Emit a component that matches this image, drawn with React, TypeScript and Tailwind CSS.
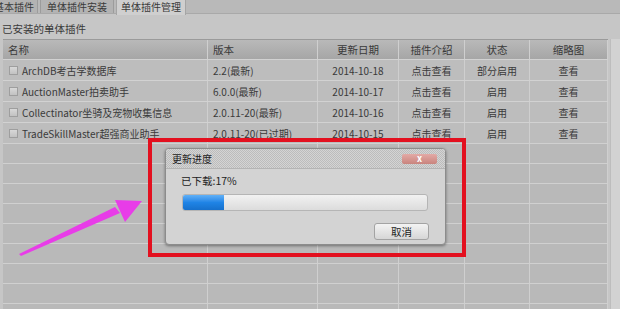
import React from 'react';

const rows = [
  { name: 'ArchDB考古学数据库', ver: '2.2(最新)', date: '2014-10-18', state: '部分启用' },
  { name: 'AuctionMaster拍卖助手', ver: '6.0.0(最新)', date: '2014-10-17', state: '启用' },
  { name: 'Collectinator坐骑及宠物收集信息', ver: '2.0.11-20(最新)', date: '2014-10-16', state: '启用' },
  { name: 'TradeSkillMaster超强商业助手', ver: '2.0.11-20(已过期)', date: '2014-10-15', state: '启用' },
];

const cols = 'grid grid-cols-[205px_110px_81px_66px_65px_78px]';
const cell = 'border-r border-[#cfcfcf] flex items-center';

const App = () => {
  return (
    <div
      className="relative w-[620px] h-[309px] overflow-hidden bg-[#c6c6c6] text-[#3a3a3a] text-[11px]"
      style={{ fontFamily: '"Noto Sans CJK SC", "Liberation Sans", sans-serif' }}
    >
      {/* tabs */}
      <div className="flex h-[14px] bg-[#b9b9b9] border-b border-[#a9a9a9] text-[10px] leading-[13px]">
        <div className="w-[38px] bg-[#b3b3b3] border-r border-[#9c9c9c] overflow-hidden whitespace-nowrap flex justify-end pr-[3px]">
          <span className="shrink-0">基本插件</span>
        </div>
        <div className="w-[74px] ml-[2px] bg-[#b3b3b3] border-x border-[#9c9c9c] text-center">单体插件安装</div>
        <div className="w-[70px] ml-[2px] bg-[#cfcfcf] border-x border-[#a5a5a5] text-center h-[15px]">单体插件管理</div>
      </div>

      <div className="pl-[2px] pt-[7px] h-[25px] text-[10.5px]">已安装的单体插件</div>

      <div className="flex">
        <div className="ml-[3px] w-[605px]">
          {/* header */}
          <div className={`${cols} h-[20px] bg-gradient-to-b from-[#b9b9b9] to-[#a6a6a6] border-t border-[#9a9a9a] text-[10.5px]`}>
            <div className={`${cell} pl-[5px] border-[#bcbcbc]`}>名称</div>
            <div className={`${cell} pl-[5px] border-[#bcbcbc]`}>版本</div>
            <div className={`${cell} justify-center border-[#bcbcbc]`}>更新日期</div>
            <div className={`${cell} justify-center border-[#bcbcbc]`}>插件介绍</div>
            <div className={`${cell} justify-center border-[#bcbcbc]`}>状态</div>
            <div className={`${cell} justify-center border-[#bcbcbc]`}>缩略图</div>
          </div>
          {rows.map((r) => (
            <div key={r.name} className={`${cols} h-[21px] bg-[#bdbdbd] border-t border-[#d2d2d2] text-[10px]`}>
              <div className={`${cell} pl-[6px] gap-[4px] whitespace-nowrap`}>
                <span className="w-[9px] h-[9px] border border-[#9e9e9e] bg-gradient-to-b from-[#d8d8d8] to-[#c2c2c2]" />
                {r.name}
              </div>
              <div className={`${cell} pl-[5px]`}>{r.ver}</div>
              <div className={`${cell} justify-center`}>{r.date}</div>
              <div className={`${cell} justify-center`}>点击查看</div>
              <div className={`${cell} justify-center`}>{r.state}</div>
              <div className={`${cell} justify-center`}>查看</div>
            </div>
          ))}
          {Array.from({ length: 9 }).map((_, i) => (
            <div key={i} className={`${cols} h-[20px] bg-[#b9b9b9] border-t border-[#d0d0d0]`}>
              {Array.from({ length: 6 }).map((__, j) => (
                <div key={j} className={cell} />
              ))}
            </div>
          ))}
        </div>
        <div className="flex-1 ml-[2px] bg-[#d2d2d2] border-l border-[#bdbdbd]" />
      </div>

      {/* pink arrow */}
      <svg className="absolute left-0 top-0" width="620" height="309">
        <polygon points="19,254 115,207 120,213 21,256" fill="#e83ce8" />
        <polygon points="142,201 115,200 125,222" fill="#e83ce8" />
      </svg>

      {/* red highlight */}
      <div className="absolute left-[148px] top-[138px] w-[318px] h-[119px] border-[4px] border-[#e3101f]" />

      {/* dialog */}
      <div className="absolute left-[165px] top-[148px] w-[281px] h-[97px] rounded-[4px] border border-[#8c8c8c] bg-[#d3d3d3] shadow-[0_1px_3px_rgba(0,0,0,0.4)] overflow-hidden">
        <div className="h-[20px] flex items-center justify-between pl-[6px] pr-[8px] border-b border-[#b4b4b4] bg-[#d2d2d2] bg-[repeating-conic-gradient(#bcbcbc_0%_25%,#d4d4d4_0%_50%)] bg-[length:2px_2px] text-[10px] text-[#222]">
          <span>更新进度</span>
          <span className="w-[35px] h-[10px] rounded-[2px] bg-gradient-to-b from-[#e3aaa6] to-[#c9847e] text-white text-[9px] leading-[9px] flex justify-center font-bold">x</span>
        </div>
        <div className="pl-[15px] pt-[5px] text-[10.5px] text-[#222] leading-[14px]">已下载:17%</div>
        <div className="ml-[16px] mt-[6px] w-[246px] h-[17px] rounded-[3px] border border-[#b5b5b5] bg-gradient-to-b from-[#f2f2f2] to-[#dcdcdc] overflow-hidden">
          <div className="w-[41px] h-full bg-gradient-to-b from-[#5fb0f7] via-[#1f84e6] to-[#1670cc]" />
        </div>
        <div className="flex justify-end pr-[16px] mt-[12px]">
          <div className="w-[55px] h-[17px] rounded-[3px] border border-[#a3a3a3] bg-gradient-to-b from-[#f3f3f3] to-[#d6d6d6] flex items-center justify-center text-[10.5px] text-[#222]">
            取消
          </div>
        </div>
      </div>
    </div>
  );
};

export default App;
